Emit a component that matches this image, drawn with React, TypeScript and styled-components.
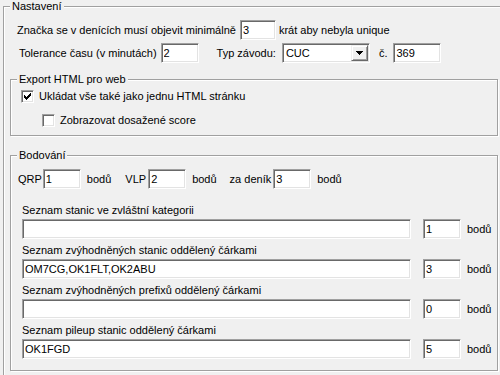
import { createGlobalStyle } from 'styled-components';
import styled from 'styled-components';

const GlobalStyle = createGlobalStyle`
  html, body {
    margin: 0;
    padding: 0;
    background: #f0f0f0;
  }
  body {
    font-family: "Liberation Sans", Arial, sans-serif;
    font-size: 11px;
    color: #000;
  }
`;

const Window = styled.div`
  width: 500px;
  height: 375px;
  overflow: hidden;
  background: #f0f0f0;
  padding: 6px 0 0 3px;
  box-sizing: border-box;
`;

const Group = styled.div<{ $w: number; $h: number; $pad: string; $mt?: number }>`
  position: relative;
  box-sizing: border-box;
  width: ${({ $w }) => $w}px;
  height: ${({ $h }) => $h}px;
  margin-top: ${({ $mt }) => $mt ?? 0}px;
  padding: ${({ $pad }) => $pad};
  border: 1px solid #a0a0a0;
  box-shadow: inset 1px 1px 0 #fff, 1px 1px 0 #fff;
`;

const GroupTitle = styled.span<{ $left: number }>`
  position: absolute;
  top: -7px;
  left: ${({ $left }) => $left}px;
  padding: 0 2px;
  line-height: 13px;
  background: #f0f0f0;
  white-space: nowrap;
`;

const Row = styled.div<{ $indent?: number; $mt?: number; $h?: number }>`
  display: flex;
  align-items: center;
  height: ${({ $h }) => $h ?? 20}px;
  padding-left: ${({ $indent }) => $indent ?? 0}px;
  margin-top: ${({ $mt }) => $mt ?? 0}px;
  white-space: nowrap;
`;

const Text = styled.span<{ $ml?: number }>`
  margin-left: ${({ $ml }) => $ml ?? 0}px;
  line-height: 13px;
`;

const Field = styled.input<{ $w: number; $ml?: number }>`
  box-sizing: border-box;
  width: ${({ $w }) => $w}px;
  height: 20px;
  margin: 0 0 0 ${({ $ml }) => $ml ?? 0}px;
  padding: 0 2px;
  font: inherit;
  color: #000;
  background: #fff;
  border-style: solid;
  border-width: 1px;
  border-color: #a0a0a0 #fff #fff #a0a0a0;
  box-shadow: inset 1px 1px 0 #696969, inset -1px -1px 0 #e3e3e3;
  outline: none;
`;

const Combo = styled.div<{ $w: number; $ml?: number }>`
  box-sizing: border-box;
  display: flex;
  align-items: center;
  width: ${({ $w }) => $w}px;
  height: 20px;
  margin-left: ${({ $ml }) => $ml ?? 0}px;
  padding: 1px 1px 1px 3px;
  background: #fff;
  border-style: solid;
  border-width: 1px;
  border-color: #a0a0a0 #fff #fff #a0a0a0;
  box-shadow: inset 1px 1px 0 #696969, inset -1px -1px 0 #e3e3e3;
`;

const ComboValue = styled.span`
  flex: 1;
  line-height: 13px;
`;

const DropButton = styled.div`
  box-sizing: border-box;
  width: 17px;
  height: 16px;
  display: flex;
  align-items: center;
  justify-content: center;
  background: #f0f0f0;
  border-style: solid;
  border-width: 1px;
  border-color: #f0f0f0 #696969 #696969 #f0f0f0;
  box-shadow: inset 1px 1px 0 #fff, inset -1px -1px 0 #a0a0a0;
`;

const CheckBox = styled.div`
  box-sizing: border-box;
  width: 13px;
  height: 13px;
  background: #fff;
  border-style: solid;
  border-width: 1px;
  border-color: #a0a0a0 #fff #fff #a0a0a0;
  box-shadow: inset 1px 1px 0 #696969, inset -1px -1px 0 #e3e3e3;
  display: flex;
  align-items: flex-start;
  justify-content: flex-start;
`;

const ListBlock = styled.div<{ $mt: number }>`
  margin-top: ${({ $mt }) => $mt}px;
  padding-left: 4px;
`;

const ListLabel = styled.div`
  line-height: 13px;
  margin-bottom: 2px;
  white-space: nowrap;
`;

function Arrow() {
  return (
    <svg width="7" height="4" viewBox="0 0 7 4" shapeRendering="crispEdges">
      <rect x="0" y="0" width="7" height="1" fill="#000" />
      <rect x="1" y="1" width="5" height="1" fill="#000" />
      <rect x="2" y="2" width="3" height="1" fill="#000" />
      <rect x="3" y="3" width="1" height="1" fill="#000" />
    </svg>
  );
}

function Tick() {
  const cols = [2, 3, 4, 3, 2, 1, 0];
  return (
    <svg width="7" height="7" viewBox="0 0 7 7" shapeRendering="crispEdges" style={{ margin: '2px 0 0 2px' }}>
      {cols.map((top, i) => (
        <rect key={i} x={i} y={top} width="1" height="3" fill="#000" />
      ))}
    </svg>
  );
}

function Check({ checked, label }: { checked: boolean; label: string }) {
  return (
    <>
      <CheckBox>{checked && <Tick />}</CheckBox>
      <Text $ml={5}>{label}</Text>
    </>
  );
}

const lists = [
  { label: 'Seznam stanic ve zvláštní kategorii', value: '', points: '1' },
  { label: 'Seznam zvýhodněných stanic oddělený čárkami', value: 'OM7CG,OK1FLT,OK2ABU', points: '3' },
  { label: 'Seznam zvýhodněných prefixů oddělený čárkami', value: '', points: '0' },
  { label: 'Seznam pileup stanic oddělený čárkami', value: 'OK1FGD', points: '5' },
];

export default function App() {
  return (
    <>
      <GlobalStyle />
      <Window>
        <Group $w={520} $h={400} $pad="13px 0 0 6px">
          <GroupTitle $left={6}>Nastavení</GroupTitle>

          <Row $indent={7}>
            <Text>Značka se v denících musí objevit minimálně</Text>
            <Field $w={36} $ml={4} value="3" readOnly />
            <Text $ml={3}>krát aby nebyla unique</Text>
          </Row>

          <Row $indent={9} $mt={3}>
            <Text>Tolerance času (v minutách)</Text>
            <Field $w={38} $ml={4} value="2" readOnly />
            <Text $ml={18}>Typ závodu:</Text>
            <Combo $w={88} $ml={6}>
              <ComboValue>CUC</ComboValue>
              <DropButton>
                <Arrow />
              </DropButton>
            </Combo>
            <Text $ml={9}>č.</Text>
            <Field $w={48} $ml={6} value="369" readOnly />
          </Row>

          <Group $w={488} $h={57} $mt={16} $pad="10px 0 0 10px">
            <GroupTitle $left={6}>Export HTML pro web</GroupTitle>
            <Row $h={13}>
              <Check checked label="Ukládat vše také jako jednu HTML stránku" />
            </Row>
            <Row $h={13} $mt={11} $indent={21}>
              <Check checked={false} label="Zobrazovat dosažené score" />
            </Row>
          </Group>

          <Group $w={488} $h={216} $mt={19} $pad="13px 0 0 7px">
            <GroupTitle $left={6}>Bodování</GroupTitle>
            <Row>
              <Text>QRP</Text>
              <Field $w={38} $ml={1} value="1" readOnly />
              <Text $ml={6}>bodů</Text>
              <Text $ml={14}>VLP</Text>
              <Field $w={38} $ml={2} value="2" readOnly />
              <Text $ml={6}>bodů</Text>
              <Text $ml={13}>za deník</Text>
              <Field $w={38} $ml={2} value="3" readOnly />
              <Text $ml={6}>bodů</Text>
            </Row>

            {lists.map((item, i) => (
              <ListBlock key={item.label} $mt={i === 0 ? 15 : 5}>
                <ListLabel>{item.label}</ListLabel>
                <Row>
                  <Field $w={389} value={item.value} readOnly />
                  <Field $w={38} $ml={12} value={item.points} readOnly />
                  <Text $ml={6}>bodů</Text>
                </Row>
              </ListBlock>
            ))}
          </Group>
        </Group>
      </Window>
    </>
  );
}
